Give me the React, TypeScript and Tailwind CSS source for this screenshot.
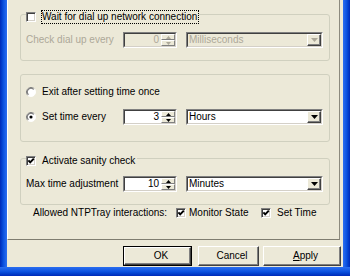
import React from "react";

function Check({ checked }: { checked?: boolean }) {
  return (
    <span className="relative flex w-[10px] h-[10px] shrink-0 bg-white border border-t-[#808080] border-l-[#808080] border-b-white border-r-white shadow-[inset_1px_1px_0_#404040,inset_-1px_-1px_0_#d4d0c8]">
      {checked && (
        <svg className="absolute inset-0" width="8" height="8" viewBox="0 0 8 8">
          <path d="M1.4 3.4 L3.2 5.4 L6.8 1.6" stroke="#000" strokeWidth="2" fill="none" />
        </svg>
      )}
    </span>
  );
}

function Radio({ on }: { on?: boolean }) {
  return (
    <svg width="10" height="10" viewBox="0 0 12 12" className="shrink-0">
      <circle cx="6" cy="6" r="5.5" fill="#fff" />
      <path d="M10 2A5.66 5.66 0 0 0 2 10" stroke="#808080" fill="none" />
      <path d="M9.2 2.8A4.5 4.5 0 0 0 2.8 9.2" stroke="#404040" fill="none" />
      <path d="M2 10A5.66 5.66 0 0 0 10 2" stroke="#fff" fill="none" />
      {on && <circle cx="6" cy="6" r="1.9" fill="#000" />}
    </svg>
  );
}

// sunken 2px classic edit frame
function Sunken({ className, disabled, children }: { className: string; disabled?: boolean; children: React.ReactNode }) {
  return (
    <div className={`h-[16px] border border-t-[#808080] border-l-[#808080] border-b-white border-r-white ${className}`}>
      <div
        className={`flex h-full border border-t-[#404040] border-l-[#404040] border-b-[#d4d0c8] border-r-[#d4d0c8] ${
          disabled ? "bg-[#ece9d8] text-[#aca899]" : "bg-white"
        }`}
      >
        {children}
      </div>
    </div>
  );
}

function Arrow({ dir, size, disabled }: { dir: "up" | "down"; size: number; disabled?: boolean }) {
  const h = Math.ceil(size / 2);
  const d = dir === "up" ? `M0 ${h} L${size / 2} 0 L${size} ${h} Z` : `M0 0 L${size} 0 L${size / 2} ${h} Z`;
  return (
    <svg width={size} height={h} viewBox={`0 0 ${size} ${h}`}>
      <path d={d} fill={disabled ? "#aca899" : "#000"} />
    </svg>
  );
}

function Spin({ value, disabled }: { value: string; disabled?: boolean }) {
  return (
    <Sunken className="w-[54px]" disabled={disabled}>
      <span className="flex-1 text-right pr-[2px] leading-[12px]">{value}</span>
      <div className="flex flex-col w-[14px]">
        <div className="flex-1 flex items-center justify-center bg-[#ece9d8] border border-t-white border-l-white border-b-[#808080] border-r-[#808080]">
          <Arrow dir="up" size={5} disabled={disabled} />
        </div>
        <div className="flex-1 flex items-center justify-center bg-[#ece9d8] border border-t-white border-l-white border-b-[#808080] border-r-[#808080]">
          <Arrow dir="down" size={5} disabled={disabled} />
        </div>
      </div>
    </Sunken>
  );
}

function Combo({ value, disabled }: { value: string; disabled?: boolean }) {
  return (
    <Sunken className="w-[137px] ml-[9px]" disabled={disabled}>
      <span className="flex-1 pl-[1px] leading-[12px]">{value}</span>
      <div className="w-[14px] flex items-center justify-center bg-[#ece9d8] border border-t-white border-l-white border-b-[#404040] border-r-[#404040] shadow-[inset_-1px_-1px_0_#808080]">
        <Arrow dir="down" size={7} disabled={disabled} />
      </div>
    </Sunken>
  );
}

function Button({ children, isDefault, className }: { children: React.ReactNode; isDefault?: boolean; className: string }) {
  const face = (
    <div className="h-full flex items-center justify-center pl-[7px] bg-[#ece9d8] border border-t-white border-l-white border-b-[#404040] border-r-[#404040] shadow-[inset_-1px_-1px_0_#808080]">
      {children}
    </div>
  );
  return isDefault ? (
    <div className={`h-[20px] border border-black ${className}`}>{face}</div>
  ) : (
    <div className={`h-[20px] ${className}`}>{face}</div>
  );
}

export default function App() {
  return (
    <div className="w-[350px] h-[276px] flex flex-col overflow-hidden font-['Liberation_Sans',Arial,sans-serif] text-[10px] leading-[12px] text-black">
      <div className="flex flex-1 min-h-0">
        <div className="w-[7px] bg-linear-to-r from-[#0029b8] via-[#0c52e0] to-[#2a6ef0]" />
        <div className="w-[336px] bg-[#ece9d8] flex flex-col">
          {/* property page */}
          <div className="w-[333px] h-[240px] shrink-0 border-l border-l-white border-r border-r-[#8c8a7e] border-b border-b-[#7f7d70] flex flex-col">
            {/* dial up group */}
            <div className="relative mt-[14px] ml-[12px] w-[310px] h-[47px] shrink-0 border border-[#d0d0bf] rounded-[3px]">
              <div className="absolute left-[5px] -top-[5px] h-[14px] flex items-center bg-[#ece9d8]">
                <Check />
                <span className="ml-[5px] h-[14px] pr-[1px] flex items-center border border-dotted border-black">
                  Wait for dial up network connection
                </span>
              </div>
              <div className="mt-[17px] flex items-center">
                <span className="w-[102px] pl-[5px] text-[#aca899]">Check dial up every</span>
                <Spin value="0" disabled />
                <Combo value="Milliseconds" disabled />
              </div>
            </div>

            {/* set time group */}
            <div className="mt-[13px] ml-[12px] w-[310px] h-[68px] shrink-0 border border-[#d0d0bf] rounded-[3px]">
              <div className="mt-[10px] h-[14px] pl-[5px] flex items-center">
                <Radio />
                <span className="ml-[6px]">Exit after setting time once</span>
              </div>
              <div className="mt-[10px] flex items-center">
                <div className="w-[102px] pl-[5px] flex items-center">
                  <Radio on />
                  <span className="ml-[6px]">Set time every</span>
                </div>
                <Spin value="3" />
                <Combo value="Hours" />
              </div>
            </div>

            {/* sanity group */}
            <div className="relative mt-[16px] ml-[12px] w-[310px] h-[47px] shrink-0 border border-[#d0d0bf] rounded-[3px]">
              <div className="absolute left-[5px] -top-[5px] h-[14px] flex items-center bg-[#ece9d8]">
                <Check checked />
                <span className="ml-[5px] h-[14px] pr-[1px] flex items-center border border-transparent">
                  Activate sanity check
                </span>
              </div>
              <div className="mt-[17px] flex items-center">
                <span className="w-[102px] pl-[5px]">Max time adjustment</span>
                <Spin value="10" />
                <Combo value="Minutes" />
              </div>
            </div>

            <div className="mt-[1px] ml-[25px] h-[14px] flex items-center">
              <span className="w-[143px]">Allowed NTPTray interactions:</span>
              <Check checked />
              <span className="ml-[3px] w-[72px]">Monitor State</span>
              <Check checked />
              <span className="ml-[6px]">Set Time</span>
            </div>
          </div>

          {/* dialog buttons */}
          <div className="flex mt-[6px] ml-[116px]">
            <Button isDefault className="w-[69px]">OK</Button>
            <Button className="ml-[6px] w-[61px]">Cancel</Button>
            <Button className="ml-[4px] w-[78px]">
              <span>
                <span className="underline">A</span>pply
              </span>
            </Button>
          </div>
        </div>
        <div className="flex-1 bg-linear-to-l from-[#0029b8] via-[#0c52e0] to-[#2a6ef0]" />
      </div>
      <div className="h-[9px] bg-linear-to-b from-[#2a6ef0] via-[#0c52e0] to-[#0029b8]" />
    </div>
  );
}
